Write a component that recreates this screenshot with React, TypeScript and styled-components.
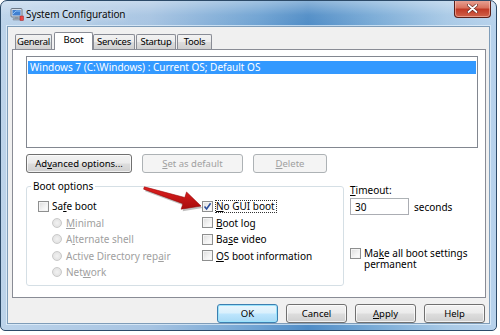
import React from 'react';
import styled, { createGlobalStyle, css } from 'styled-components';

const GlobalStyle = createGlobalStyle`
  html, body {
    margin: 0;
    padding: 0;
    background: #ffffff;
  }
  body {
    font-family: "Noto Sans", "Open Sans", Arial, sans-serif;
    font-size: 10px;
    color: #000;
  }
  * { box-sizing: border-box; }
`;

const Key = styled.span`
  text-decoration: underline;
  text-underline-offset: 1px;
`;

const label = (text: string, key: number) => (
  <span>
    {text.slice(0, key)}
    <Key>{text[key]}</Key>
    {text.slice(key + 1)}
  </span>
);

const Window = styled.div`
  position: relative;
  width: 497px;
  height: 331px;
  border: 1px solid #2c4a68;
  border-radius: 7px 7px 5px 5px;
  background:
    linear-gradient(180deg, rgba(255, 255, 255, 0.35) 0px, rgba(255, 255, 255, 0.05) 14px, rgba(0, 0, 0, 0) 26px),
    linear-gradient(90deg, #bcd3ea 0%, #a7c4e2 30%, #6ea2d2 52%, #4f8cc6 62%, #78aad6 75%, #a8c9e6 90%, #b7d2ec 100%);
  display: flex;
  flex-direction: column;
  padding: 0 6px 6px 6px;
  overflow: hidden;
`;

const TitleBar = styled.div`
  height: 25px;
  display: flex;
  align-items: center;
  gap: 2px;
  padding-left: 3px;
`;

const Title = styled.div`
  font-size: 10px;
  letter-spacing: -0.1px;
  color: #0b0b0b;
  margin-top: 1px;
  text-shadow: 0 0 6px rgba(255, 255, 255, 0.9);
`;

const CloseButton = styled.div`
  margin-left: auto;
  align-self: flex-start;
  margin-top: -1px;
  margin-right: -1px;
  width: 37px;
  height: 18px;
  border: 1px solid #5b1f19;
  border-top: none;
  border-radius: 0 0 4px 4px;
  background: linear-gradient(180deg, #e9a699 0%, #d9735f 45%, #c13a26 55%, #d0624a 100%);
  box-shadow: inset 0 0 0 1px rgba(255, 210, 200, 0.5);
  display: flex;
  align-items: center;
  justify-content: center;
`;

const Client = styled.div`
  flex: 1;
  border: 1px solid #7f9db9;
  background: #f0f0f0;
  display: flex;
  flex-direction: column;
  padding: 4px 3px 0 4px;
  box-shadow: 0 0 0 1px rgba(230, 242, 252, 0.7);
`;

const TabStrip = styled.div`
  display: flex;
  align-items: flex-end;
  height: 18px;
  padding-left: 3px;
  position: relative;
  z-index: 1;
`;

const Tab = styled.div<{ $active?: boolean; $width: number }>`
  width: ${(p) => p.$width}px;
  height: 15px;
  margin-right: 1px;
  border: 1px solid #898c95;
  border-bottom: none;
  border-radius: 2px 2px 0 0;
  background: linear-gradient(180deg, #f2f2f2 0%, #ebebeb 50%, #dddddd 51%, #cfcfcf 100%);
  display: flex;
  align-items: center;
  justify-content: center;
  font-size: 9.5px;
  letter-spacing: -0.3px;
  line-height: 1;
  ${(p) =>
    p.$active &&
    css`
      height: 18px;
      margin: 0 0 -1px 1px;
      padding-bottom: 4px;
      background: #ffffff;
    `}
`;

const Panel = styled.div`
  height: 249px;
  border: 1px solid #898c95;
  background: #ffffff;
  padding: 6px 7px 0 13px;
  display: flex;
  flex-direction: column;
`;

const OsList = styled.div`
  height: 92px;
  border: 1px solid #828790;
  background: #ffffff;
  padding: 4px 1px;
`;

const OsItem = styled.div<{ $selected?: boolean }>`
  height: 13px;
  line-height: 13px;
  padding-left: 2px;
  color: ${(p) => (p.$selected ? '#ffffff' : '#000')};
  background: ${(p) => (p.$selected ? '#3399ff' : 'transparent')};
`;

const ButtonRow = styled.div`
  display: flex;
  gap: 10px;
  margin-top: 6px;
`;

const Button = styled.button<{ $width: number; $default?: boolean }>`
  width: ${(p) => p.$width}px;
  height: 19px;
  padding: 0;
  font-family: inherit;
  font-size: 9.5px;
  color: #000;
  border: 1px solid #707070;
  border-radius: 3px;
  background: linear-gradient(180deg, #f2f2f2 0%, #ebebeb 48%, #dddddd 52%, #cfcfcf 100%);
  box-shadow: inset 0 0 0 1px rgba(255, 255, 255, 0.7);
  display: flex;
  align-items: center;
  justify-content: center;
  ${(p) =>
    p.$default &&
    css`
      border-color: #3c7fb1;
      background: linear-gradient(180deg, #eaf6fd 0%, #d9f0fc 48%, #bee6fd 52%, #a7d9f5 100%);
      box-shadow: inset 0 0 0 1px #9be3fb;
    `}
  &:disabled {
    color: #a0a0a0;
    border-color: #adb2b5;
    background: #f4f4f4;
    box-shadow: none;
  }
`;

const Lower = styled.div`
  display: flex;
  gap: 6px;
  margin-top: 7px;
`;

const Group = styled.fieldset`
  width: 318px;
  height: 106px;
  margin: 0;
  padding: 6px 0 0 11px;
  border: 1px solid #d5dfe5;
  border-radius: 3px;
  display: grid;
  grid-template-columns: 164px 1fr;
  align-content: start;
`;

const Legend = styled.legend`
  padding: 0 2px;
  margin-left: -7px;
  line-height: 12px;
`;

const Column = styled.div`
  display: flex;
  flex-direction: column;
`;

const OptionRow = styled.div<{ $indent?: boolean; $disabled?: boolean }>`
  height: 16.5px;
  display: flex;
  align-items: center;
  gap: 3px;
  padding-left: ${(p) => (p.$indent ? 14 : 0)}px;
  color: ${(p) => (p.$disabled ? '#a0a0a0' : '#000')};
  white-space: nowrap;
`;

const Box = styled.span`
  flex: none;
  width: 11px;
  height: 11px;
  border: 1px solid #8e8f8f;
  background: linear-gradient(135deg, #dcdcdc 0%, #f4f4f4 60%, #ffffff 100%);
  box-shadow: inset 0 0 0 1px #f4f4f4;
  display: flex;
  align-items: center;
  justify-content: center;
`;

const Radio = styled.span`
  flex: none;
  width: 10px;
  height: 10px;
  border-radius: 50%;
  border: 1px solid #c9c9c9;
  background: radial-gradient(circle at 50% 50%, #f2f2f2 0%, #e3e3e3 70%);
  margin-right: 1px;
`;

const Focus = styled.span`
  outline: 1px dotted #333;
  padding: 0 1px 0 0;
  line-height: 11px;
`;

const Side = styled.div`
  display: flex;
  flex-direction: column;
  padding-top: 3px;
`;

const TimeoutRow = styled.div`
  display: flex;
  align-items: center;
  gap: 5px;
  margin-top: 1px;
`;

const Input = styled.div`
  width: 59px;
  height: 17px;
  border: 1px solid #abadb3;
  border-top-color: #adb2b5;
  background: #fff;
  padding-left: 4px;
  display: flex;
  align-items: center;
`;

const PermanentRow = styled.div`
  display: flex;
  align-items: flex-start;
  gap: 3px;
  margin-top: 33px;
`;

const Wrap = styled.div`
  line-height: 11px;
`;

const Footer = styled.div`
  display: flex;
  justify-content: flex-end;
  gap: 8px;
  margin-top: 6px;
  padding-right: 1px;
`;

const Arrow = styled.svg`
  position: absolute;
  left: 135px;
  top: 180px;
  overflow: visible;
`;

const Check = () => (
  <svg width="9" height="9" viewBox="0 0 9 9">
    <path d="M1.5 4.5 L3.6 7 L7.6 1.3" fill="none" stroke="#2a4d9c" strokeWidth="1.6" />
  </svg>
);

const AppIcon = () => (
  <svg width="14" height="14" viewBox="0 0 14 14">
    <rect x="1" y="1.5" width="11" height="8.5" rx="1" fill="#d8dee6" stroke="#6b7785" />
    <rect x="2.5" y="3" width="8" height="5.5" fill="#3f7fd0" />
    <path d="M3 7 L6 4 L10 4" stroke="#9fd0ff" strokeWidth="0.8" fill="none" />
    <rect x="5" y="10" width="3" height="1.5" fill="#8a94a0" />
    <rect x="3" y="11.5" width="7" height="1.5" rx="0.5" fill="#aab3bd" stroke="#6b7785" strokeWidth="0.5" />
    <rect x="10" y="9" width="3.5" height="4.5" fill="#e44" stroke="#922" strokeWidth="0.5" />
  </svg>
);

const CloseGlyph = () => (
  <svg width="11" height="9" viewBox="0 0 11 9">
    <path d="M1.5 1 L9.5 8 M9.5 1 L1.5 8" stroke="#5b1f19" strokeWidth="3" strokeLinecap="round" />
    <path d="M1.5 1 L9.5 8 M9.5 1 L1.5 8" stroke="#ffffff" strokeWidth="1.8" strokeLinecap="round" />
  </svg>
);

const arrowPoints = '8.36,5.86 48.81,16.53 50.56,11 65,25 45.14,28.16 46.89,22.63 7.64,8.14';

const App = () => {
  return (
    <>
      <GlobalStyle />
      <Window>
        <TitleBar>
          <AppIcon />
          <Title>System Configuration</Title>
          <CloseButton>
            <CloseGlyph />
          </CloseButton>
        </TitleBar>
        <Client>
          <TabStrip>
            <Tab $width={37}>General</Tab>
            <Tab $width={39} $active>
              Boot
            </Tab>
            <Tab $width={42}>Services</Tab>
            <Tab $width={40}>Startup</Tab>
            <Tab $width={35}>Tools</Tab>
          </TabStrip>
          <Panel>
            <OsList>
              <OsItem $selected>Windows 7 (C:\Windows) : Current OS; Default OS</OsItem>
            </OsList>
            <ButtonRow>
              <Button $width={106}>{label('Advanced options...', 2)}</Button>
              <Button $width={101} disabled>
                {label('Set as default', 0)}
              </Button>
              <Button $width={74} disabled>
                {label('Delete', 0)}
              </Button>
            </ButtonRow>
            <Lower>
              <Group>
                <Legend>Boot options</Legend>
                <Column>
                  <OptionRow>
                    <Box />
                    {label('Safe boot', 2)}
                  </OptionRow>
                  <OptionRow $indent $disabled>
                    <Radio />
                    {label('Minimal', 0)}
                  </OptionRow>
                  <OptionRow $indent $disabled>
                    <Radio />
                    {label('Alternate shell', 1)}
                  </OptionRow>
                  <OptionRow $indent $disabled>
                    <Radio />
                    {label('Active Directory repair', 20)}
                  </OptionRow>
                  <OptionRow $indent $disabled>
                    <Radio />
                    {label('Network', 3)}
                  </OptionRow>
                </Column>
                <Column>
                  <OptionRow>
                    <Box>
                      <Check />
                    </Box>
                    <Focus>{label('No GUI boot', 0)}</Focus>
                  </OptionRow>
                  <OptionRow>
                    <Box />
                    {label('Boot log', 0)}
                  </OptionRow>
                  <OptionRow>
                    <Box />
                    {label('Base video', 2)}
                  </OptionRow>
                  <OptionRow>
                    <Box />
                    {label('OS boot information', 0)}
                  </OptionRow>
                </Column>
              </Group>
              <Side>
                <div>{label('Timeout:', 0)}</div>
                <TimeoutRow>
                  <Input>30</Input>
                  <span>seconds</span>
                </TimeoutRow>
                <PermanentRow>
                  <Box />
                  <Wrap>
                    {label('Make all boot settings', 2)}
                    <br />
                    <span>permanent</span>
                  </Wrap>
                </PermanentRow>
              </Side>
            </Lower>
          </Panel>
          <Footer>
            <Button $width={61} $default>
              OK
            </Button>
            <Button $width={61}>Cancel</Button>
            <Button $width={61}>{label('Apply', 0)}</Button>
            <Button $width={61}>Help</Button>
          </Footer>
        </Client>
        <Arrow width="80" height="36" viewBox="0 0 80 36">
          <defs>
            <linearGradient id="arrowFill" x1="0" y1="0" x2="0" y2="1">
              <stop offset="0" stopColor="#e02020" />
              <stop offset="1" stopColor="#a80c0c" />
            </linearGradient>
          </defs>
          <polygon points={arrowPoints} fill="rgba(0,0,0,0.25)" transform="translate(1.5,2)" />
          <polygon points={arrowPoints} fill="url(#arrowFill)" stroke="#9a0a0a" strokeWidth="0.6" />
        </Arrow>
      </Window>
    </>
  );
};

export default App;
